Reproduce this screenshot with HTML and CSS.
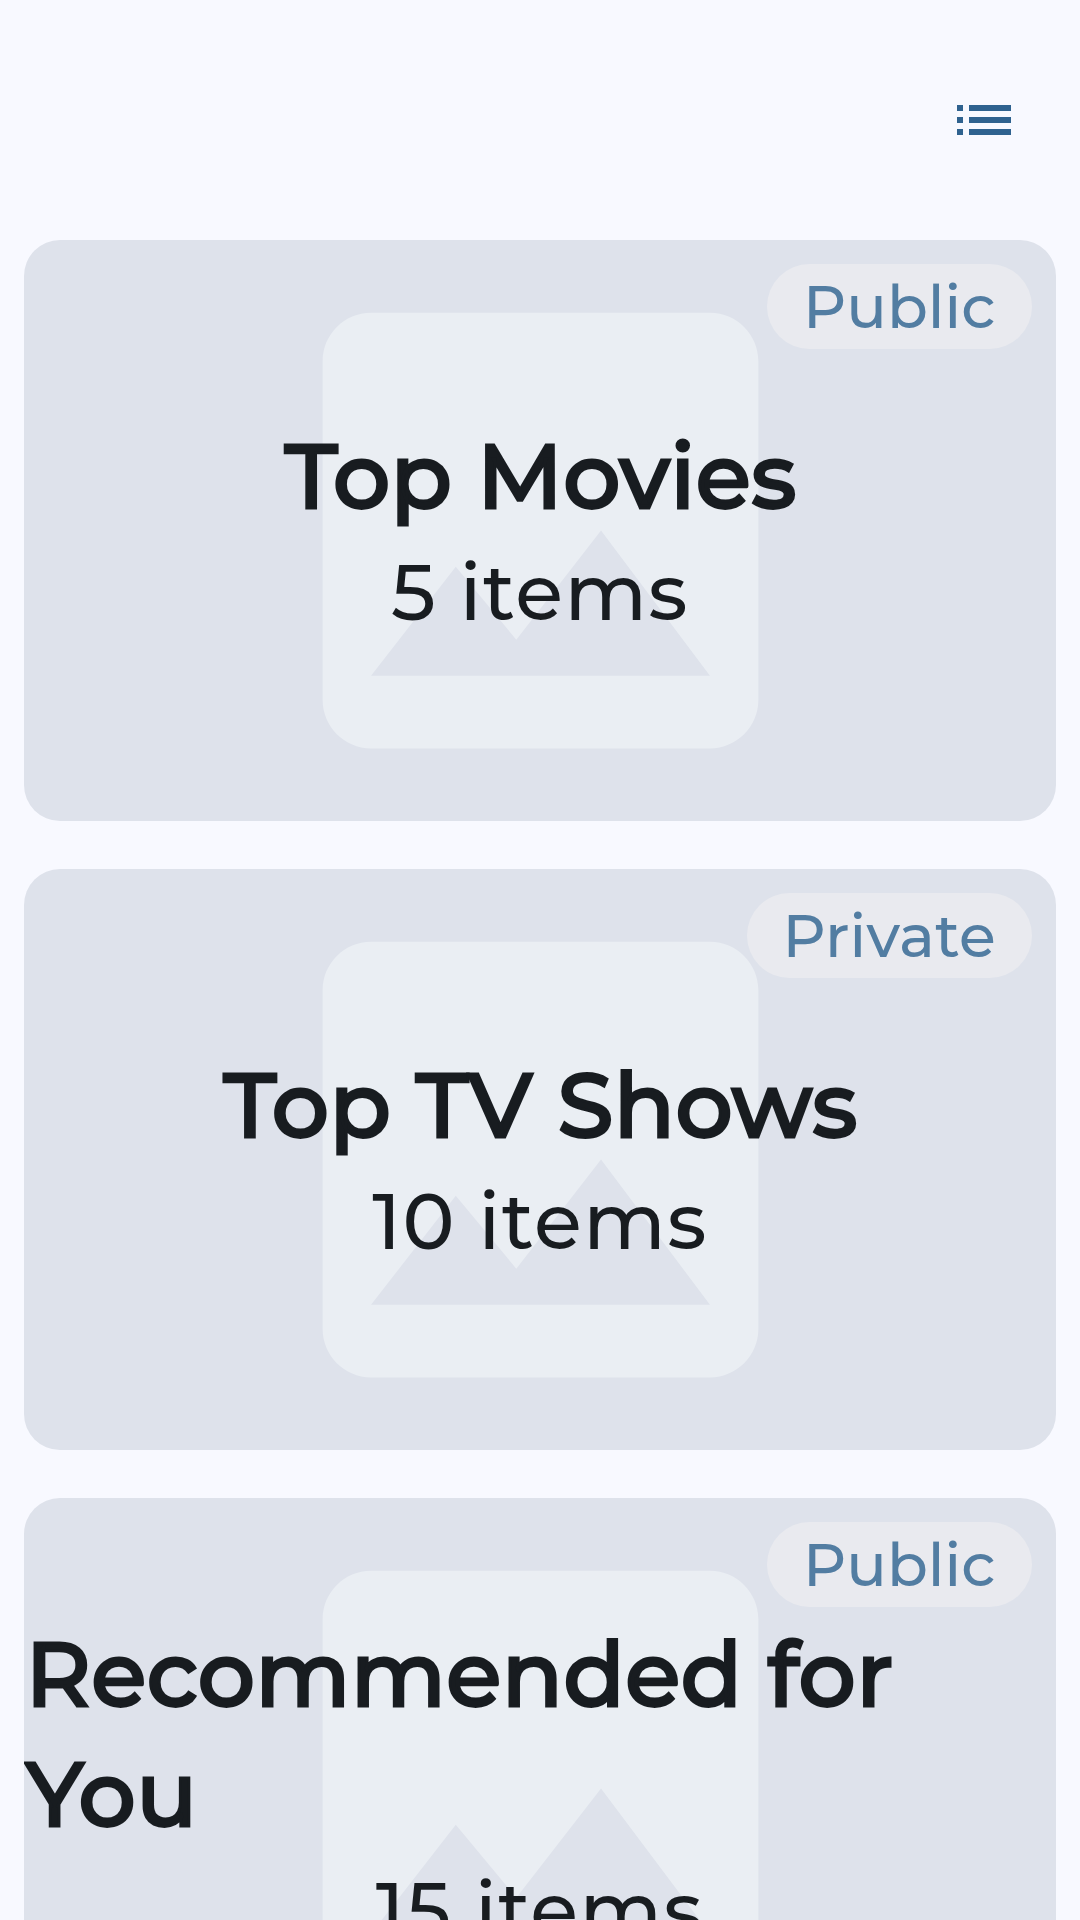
FILE: index.html
```html
<!DOCTYPE html>
<html lang="en">
<head>
  <meta charset="utf-8">
  <title>Lists</title>
  <link rel="stylesheet" href="styles.css">
</head>
<body>
  <svg width="0" height="0" class="defs" aria-hidden="true">
    <symbol id="image" viewBox="0 0 24 24">
      <path d="M21 19V5c0-1.1-.9-2-2-2H5c-1.1 0-2 .9-2 2v14c0 1.1.9 2 2 2h14c1.1 0 2-.9 2-2zM8.5 13.5l2.5 3.01L14.5 12l4.5 6H5l3.5-4.5z"/>
    </symbol>
  </svg>
  <header class="topbar">
    <button class="view-toggle" aria-label="List view">
      <svg class="view-icon" viewBox="0 0 24 24">
        <path d="M3 7h2v2H3zM7 7h14v2H7zM3 11h2v2H3zM7 11h14v2H7zM3 15h2v2H3zM7 15h14v2H7z"/>
      </svg>
    </button>
  </header>
  <main class="lists">
    <article class="card">
      <svg class="placeholder"><use href="#image"/></svg>
      <div class="card-text">
        <h2 class="title">Top Movies</h2>
        <p class="count">5 items</p>
      </div>
      <span class="chip">Public</span>
    </article>
    <article class="card">
      <svg class="placeholder"><use href="#image"/></svg>
      <div class="card-text">
        <h2 class="title">Top TV Shows</h2>
        <p class="count">10 items</p>
      </div>
      <span class="chip chip-private">Private</span>
    </article>
    <article class="card">
      <svg class="placeholder"><use href="#image"/></svg>
      <div class="card-text">
        <h2 class="title">Recommended for You</h2>
        <p class="count">15 items</p>
      </div>
      <span class="chip">Public</span>
    </article>
  </main>
</body>
</html>
```
FILE: styles.css
```css
* { box-sizing: border-box; margin: 0; }

body {
  height: 1920px;
  overflow: hidden;
  background: #f8f9ff;
  color: #181c20;
  font-family: Montserrat, Inter, sans-serif;
}

.defs { position: absolute; }

.topbar {
  display: flex;
  justify-content: flex-end;
  align-items: center;
  height: 240px;
  padding: 0 60px;
}

.view-toggle {
  display: flex;
  padding: 0;
  border: 0;
  background: none;
}

.view-icon { width: 72px; height: 72px; fill: #2f628f; }

.lists {
  display: flex;
  flex-direction: column;
  gap: 48px;
  height: 1680px;
  padding: 0 24px;
  overflow: hidden;
}

.card {
  position: relative;
  display: grid;
  flex: none;
  height: 581px;
  border-radius: 36px;
  background: #dee2eb;
  overflow: hidden;
}

.placeholder,
.card-text { grid-area: 1 / 1; }

.placeholder {
  width: 581px;
  height: 581px;
  justify-self: center;
  fill: #eaeef3;
}

.card-text {
  z-index: 1;
  display: flex;
  flex-direction: column;
  align-items: center;
  justify-content: center;
}

.title {
  padding-left: 1.4px;
  font-size: 90px;
  font-weight: 500;
  line-height: 120px;
  letter-spacing: 0.4px;
  -webkit-text-stroke: 2.8px currentColor;
  stroke-linejoin: miter;
}

.count {
  padding-top: 3px;
  font-size: 78px;
  font-weight: 500;
  line-height: 107px;
  letter-spacing: 1.5px;
}

.chip {
  position: absolute;
  top: 24px;
  right: 24px;
  height: 85px;
  min-width: 265px;
  padding: 0 36px;
  border-radius: 42.5px;
  background: #e9eaef;
  color: #527da2;
  font-size: 60px;
  font-weight: 500;
  line-height: 85px;
}

.chip-private { letter-spacing: 0.25px; }
```
